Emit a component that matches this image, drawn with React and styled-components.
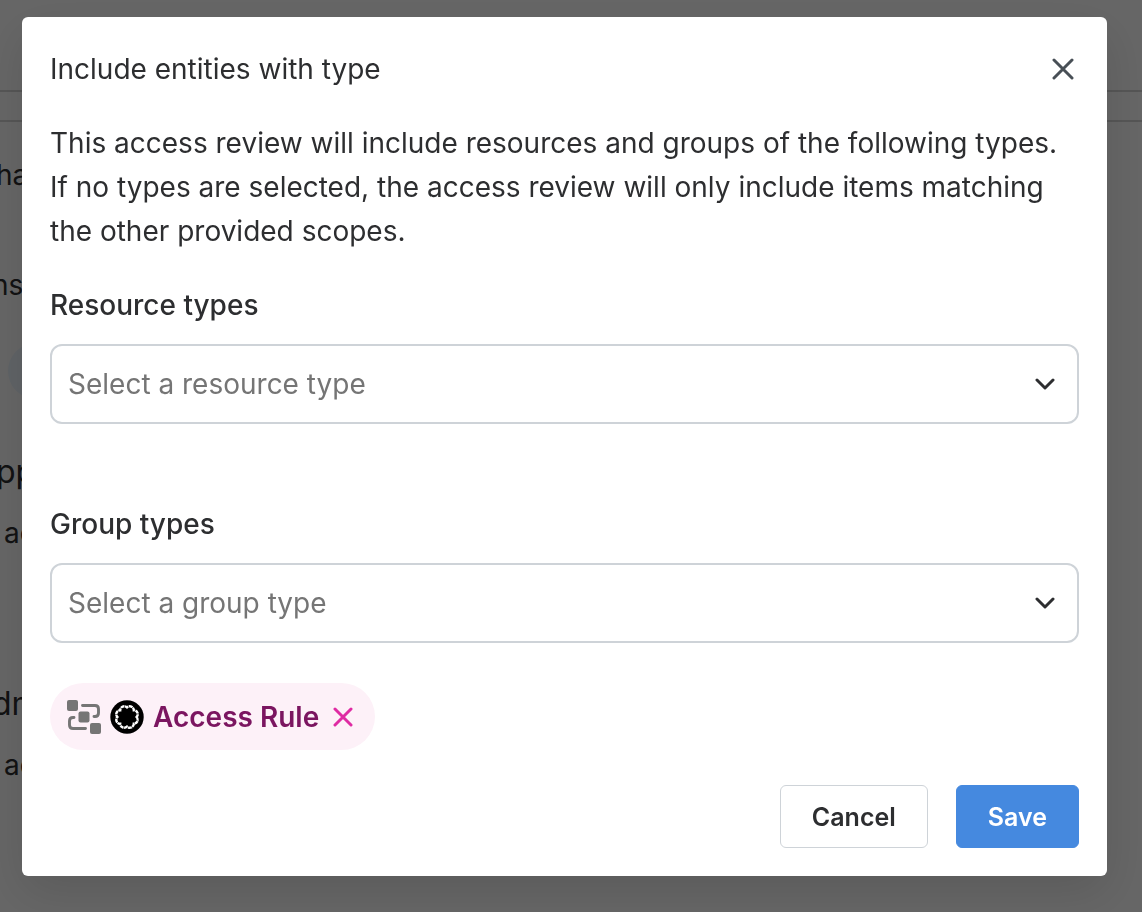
import React from "react";
import styled, { createGlobalStyle } from "styled-components";

const GlobalStyle = createGlobalStyle`
  * {
    box-sizing: border-box;
  }

  body {
    margin: 0;
    color: #2d2e30;
    background: #ffffff;
    font-family: Inter, "Liberation Sans", sans-serif;
    font-size: 28px;
    font-optical-sizing: none;
  }
`;

export default function App() {
  return (
    <>
      <GlobalStyle />
      <Page aria-hidden="true">
        <PageBar />
        <PageStrip />
        <PageRow $space={22} $start={-4}>
          ha
        </PageRow>
        <PageRow $space={48} $start={-8}>
          ns
        </PageRow>
        <PageRow $space={24} $start={8}>
          <PageTag />
        </PageRow>
        <PageRow $space={38} $start={-4} $large>
          pp
        </PageRow>
        <PageRow $start={4}>ac</PageRow>
        <PageRow $space={108} $start={-8} $large>
          dm
        </PageRow>
        <PageRow $start={4}>ac</PageRow>
      </Page>
      <Overlay>
        <Modal role="dialog" aria-modal="true" aria-labelledby="modal-title">
          <Header>
            <Title id="modal-title">Include entities with type</Title>
            <IconButton type="button" aria-label="Close">
              <CrossIcon size={22} strokeWidth={3} />
            </IconButton>
          </Header>
          <Description>
            This access review will include resources and groups of the
            following types. If no types are selected, the access review will
            only include items matching the other provided scopes.
          </Description>
          <TypeSelect
            id="resource-types"
            label="Resource types"
            placeholder="Select a resource type"
          />
          <TypeSelect
            id="group-types"
            label="Group types"
            placeholder="Select a group type"
          />
          <Chip>
            <GroupIcon />
            <BrandIcon />
            <ChipLabel>Access Rule</ChipLabel>
            <ChipRemove type="button" aria-label="Remove Access Rule">
              <CrossIcon size={20} strokeWidth={3} />
            </ChipRemove>
          </Chip>
          <Footer>
            <Button type="button">Cancel</Button>
            <Button type="button" $primary>
              Save
            </Button>
          </Footer>
        </Modal>
      </Overlay>
    </>
  );
}

function TypeSelect({ id, label, placeholder }) {
  return (
    <Field>
      <Label htmlFor={id}>{label}</Label>
      <SelectBox>
        <Select id={id} defaultValue="">
          <option value="">{placeholder}</option>
        </Select>
        <Chevron viewBox="0 0 20 12" aria-hidden="true">
          <path d="M2 2l8 8 8-8" />
        </Chevron>
      </SelectBox>
    </Field>
  );
}

function CrossIcon({ size, strokeWidth }) {
  const end = size - 2;
  return (
    <svg
      width={size}
      height={size}
      fill="none"
      stroke="currentColor"
      strokeWidth={strokeWidth}
      strokeLinecap="round"
      aria-hidden="true"
    >
      <path d={`M2 2L${end} ${end}M${end} 2L2 ${end}`} />
    </svg>
  );
}

function GroupIcon() {
  return (
    <svg width="34" height="34" viewBox="0 0 34 34" aria-hidden="true">
      <g fill="#757575">
        <rect width="11" height="11" rx="2" />
        <rect x="11.5" y="11.5" width="11" height="11" rx="2" />
        <rect x="23" y="23" width="11" height="11" rx="2" />
      </g>
      <g fill="none" stroke="#757575" strokeWidth="2.9" strokeLinecap="round">
        <path d="M15.5 5.5H28Q31.5 5.5 31.5 9V13Q31.5 16.5 28 16.5H27" />
        <path d="M7 17.5H6Q2.5 17.5 2.5 21V25Q2.5 28.5 6 28.5H18.5" />
      </g>
    </svg>
  );
}

function BrandIcon() {
  return (
    <svg width="34" height="34" viewBox="-17 -17 34 34" aria-hidden="true">
      <circle r="16.7" fill="#000000" />
      <path
        d="M9.6 0A4 4 0 0 1 6.79 6.79A4 4 0 0 1 0 9.6A4 4 0 0 1 -6.79 6.79A4 4 0 0 1 -9.6 0A4 4 0 0 1 -6.79 -6.79A4 4 0 0 1 0 -9.6A4 4 0 0 1 6.79 -6.79A4 4 0 0 1 9.6 0Z"
        fill="none"
        stroke="#ffffff"
        strokeWidth="2.4"
        strokeDasharray="3.9 0.5"
      />
    </svg>
  );
}

const Page = styled.div`
  height: 100vh;
  overflow: hidden;
`;

const PageBar = styled.div`
  height: 92px;
  border-bottom: 2px solid #d5d5d5;
`;

const PageStrip = styled.div`
  height: 30px;
  border-bottom: 2px solid #d5d5d5;
`;

const PageRow = styled.div`
  display: flex;
  align-items: center;
  height: 62px;
  margin-top: ${({ $space }) => $space || 0}px;
  margin-left: ${({ $start }) => $start}px;
  font-size: ${({ $large }) => ($large ? 32 : 28)}px;
`;

const PageTag = styled.div`
  width: 160px;
  height: 56px;
  border-radius: 28px;
  background: #eef6ff;
`;

const Overlay = styled.div`
  position: fixed;
  inset: 0;
  padding: 17px 35px 36px 22px;
  overflow: auto;
  background: rgba(0, 0, 0, 0.6);
`;

const Modal = styled.div`
  display: flex;
  flex-direction: column;
  padding: 28px;
  border-radius: 6px;
  background: #ffffff;
  box-shadow: 0 16px 48px rgba(0, 0, 0, 0.12);
`;

const Header = styled.div`
  display: flex;
  align-items: center;
  justify-content: space-between;
  height: 48px;
`;

const Title = styled.h2`
  margin: 0;
  font-size: 28px;
  font-weight: 400;
`;

const IconButton = styled.button`
  display: flex;
  padding: 5px;
  border: 0;
  background: none;
  color: #484f56;
  cursor: pointer;
`;

const Description = styled.p`
  margin: 28px 0 32px;
  line-height: 44px;
`;

const Field = styled.div`
  display: flex;
  flex-direction: column;
  gap: 19px;
  margin-bottom: 80px;

  & + & {
    margin-bottom: 40px;
  }
`;

const Label = styled.label`
  font-weight: 500;
  line-height: 40px;
`;

const SelectBox = styled.div`
  display: grid;
  align-items: center;

  > * {
    grid-area: 1 / 1;
  }
`;

const Select = styled.select`
  width: 100%;
  height: 80px;
  padding: 0 64px 0 16px;
  appearance: none;
  border: 2px solid #ced3d8;
  border-radius: 12px;
  background: #ffffff;
  color: #757575;
  font: inherit;
`;

const Chevron = styled.svg`
  justify-self: end;
  width: 20px;
  height: 12px;
  margin-right: 24px;
  fill: none;
  stroke: #2d2e30;
  stroke-width: 3;
  stroke-linecap: round;
  stroke-linejoin: round;
  pointer-events: none;
`;

const Chip = styled.div`
  display: flex;
  align-items: center;
  align-self: flex-start;
  gap: 9px;
  height: 67px;
  padding: 0 17px;
  border-radius: 34px;
  background: #fdf1f8;
`;

const ChipLabel = styled.span`
  color: #7b1560;
  font-weight: 600;
`;

const ChipRemove = styled.button`
  display: flex;
  padding: 5px;
  border: 0;
  background: none;
  color: #df2ba3;
  cursor: pointer;
`;

const Footer = styled.div`
  display: flex;
  justify-content: flex-end;
  gap: 28px;
  margin-top: 35px;
`;

const Button = styled.button`
  height: 63px;
  padding: 0 31px;
  border: 1px solid ${({ $primary }) => ($primary ? "#4589df" : "#ced3d8")};
  border-radius: 6px;
  background: ${({ $primary }) => ($primary ? "#4589df" : "#ffffff")};
  color: ${({ $primary }) => ($primary ? "#ffffff" : "#2d2e30")};
  font-family: inherit;
  font-size: 25px;
  font-weight: 600;
  cursor: pointer;
`;
